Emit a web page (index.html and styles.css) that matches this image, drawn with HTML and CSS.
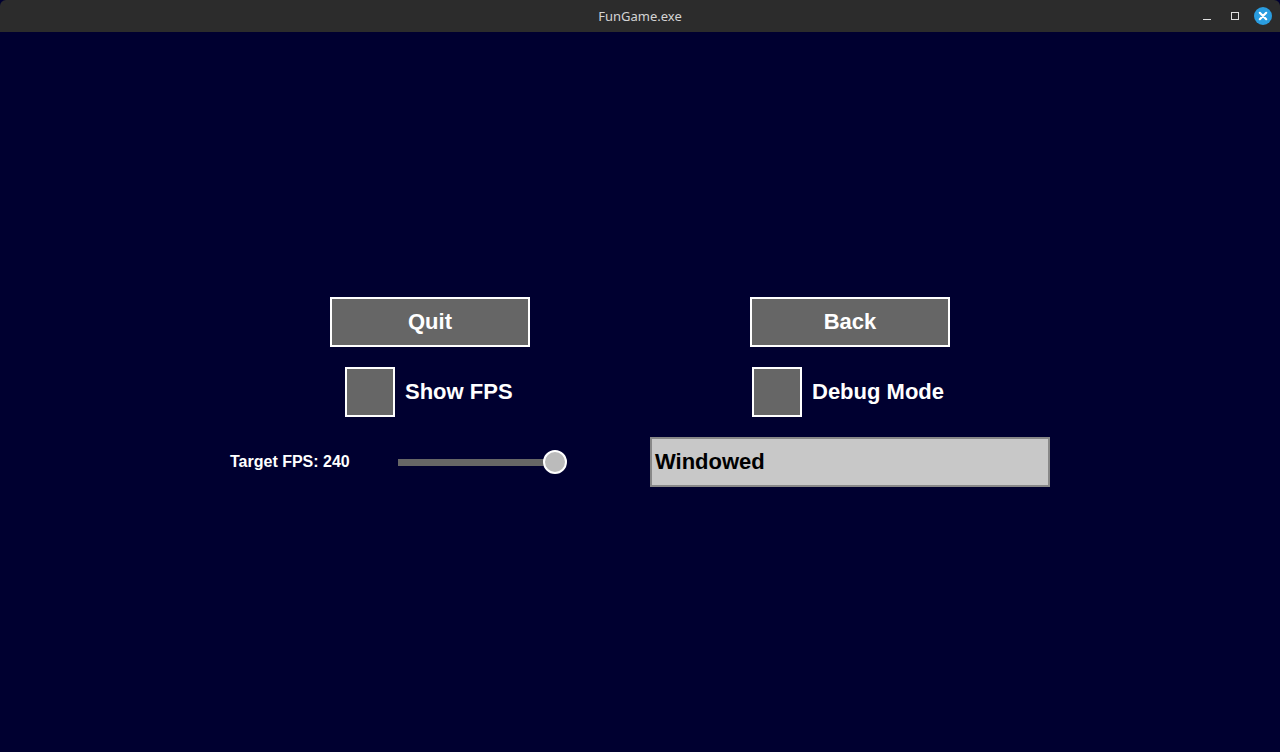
FILE: index.html
```html
<!DOCTYPE html>
<html>
<head>
<meta charset="utf-8">
<title>FunGame.exe</title>
<link rel="stylesheet" href="styles.css">
</head>
<body>
<div class="window">
  <header class="titlebar">
    <div class="title">FunGame.exe</div>
    <div class="controls">
      <span class="ctl min"><svg width="10" height="10" viewBox="0 0 10 10"><path d="M1 8.5H9" stroke="#e0e0e0" stroke-width="1"/></svg></span>
      <span class="ctl max"><svg width="10" height="10" viewBox="0 0 10 10"><rect x="1.5" y="1.5" width="7" height="7" fill="none" stroke="#e0e0e0" stroke-width="1"/></svg></span>
      <span class="ctl close"><svg width="18" height="18" viewBox="0 0 18 18"><circle cx="9" cy="9" r="9" fill="#2a9de0"/><path d="M5.8 5.8L12.2 12.2M12.2 5.8L5.8 12.2" stroke="#fff" stroke-width="2.2" stroke-linecap="round"/></svg></span>
    </div>
  </header>
  <main class="scene">
    <div class="menu">
      <div class="cell"><button class="btn">Quit</button></div>
      <div class="cell"><button class="btn">Back</button></div>
      <div class="cell check-left"><div class="check"><span class="box"></span><span class="check-label">Show FPS</span></div></div>
      <div class="cell check-right"><div class="check"><span class="box"></span><span class="check-label">Debug Mode</span></div></div>
      <div class="cell slider-row">
        <span class="slider-label">Target FPS: 240</span>
        <div class="slider"><div class="track"></div><div class="knob"></div></div>
      </div>
      <div class="cell"><div class="select">Windowed</div></div>
    </div>
  </main>
</div>
</body>
</html>
```

FILE: styles.css
```css
html, body {
  margin: 0;
  padding: 0;
  width: 1280px;
  height: 752px;
  overflow: hidden;
  background: #000030;
}
.window {
  display: flex;
  flex-direction: column;
  width: 1280px;
  height: 752px;
}
.titlebar {
  height: 32px;
  flex: none;
  background: #2c2c2c;
  border-radius: 6px 6px 0 0;
  display: flex;
  align-items: center;
  justify-content: center;
  position: relative;
}
.title {
  font-family: "Noto Sans", sans-serif;
  font-size: 13px;
  color: #d4d4d4;
}
.controls {
  position: absolute;
  right: 8px;
  top: 0;
  height: 32px;
  display: flex;
  align-items: center;
  gap: 10px;
}
.ctl {
  display: flex;
  align-items: center;
  justify-content: center;
  width: 18px;
  height: 18px;
}
.scene {
  flex: 1;
  background: #000030;
  padding-top: 265px;
  font-family: "Liberation Sans", Arial, sans-serif;
  font-weight: bold;
  color: #fff;
}
.menu {
  width: 840px;
  margin: 0 auto;
  display: grid;
  grid-template-columns: 420px 420px;
  grid-auto-rows: 50px;
  row-gap: 20px;
}
.cell {
  display: flex;
  align-items: center;
  justify-content: center;
}
.btn {
  width: 200px;
  height: 50px;
  box-sizing: border-box;
  border: 2px solid #fff;
  background: #666666;
  color: #fff;
  font-family: "Liberation Sans", Arial, sans-serif;
  font-weight: bold;
  font-size: 22px;
  padding: 0;
}
.check-left {
  justify-content: flex-start;
  padding-left: 125px;
}
.check-right {
  justify-content: flex-start;
  padding-left: 112px;
}
.check {
  display: flex;
  align-items: center;
  gap: 10px;
}
.box {
  width: 50px;
  height: 50px;
  box-sizing: border-box;
  border: 2px solid #fff;
  background: #666666;
}
.check-label {
  font-size: 22px;
}
.slider-row {
  justify-content: flex-start;
  padding-left: 10px;
}
.slider-label {
  font-size: 16px;
  width: 168px;
  flex: none;
}
.slider {
  position: relative;
  width: 169px;
  height: 24px;
  display: flex;
  align-items: center;
}
.track {
  width: 157px;
  height: 7px;
  background: #666666;
}
.knob {
  position: absolute;
  left: 145px;
  top: 0;
  width: 24px;
  height: 24px;
  box-sizing: border-box;
  border: 2px solid #fff;
  border-radius: 50%;
  background: #bbbbbb;
}
.select {
  width: 400px;
  height: 50px;
  box-sizing: border-box;
  border: 2px solid #888888;
  background: #c8c8c8;
  color: #000;
  font-size: 22px;
  display: flex;
  align-items: center;
  padding-left: 3px;
}
```
